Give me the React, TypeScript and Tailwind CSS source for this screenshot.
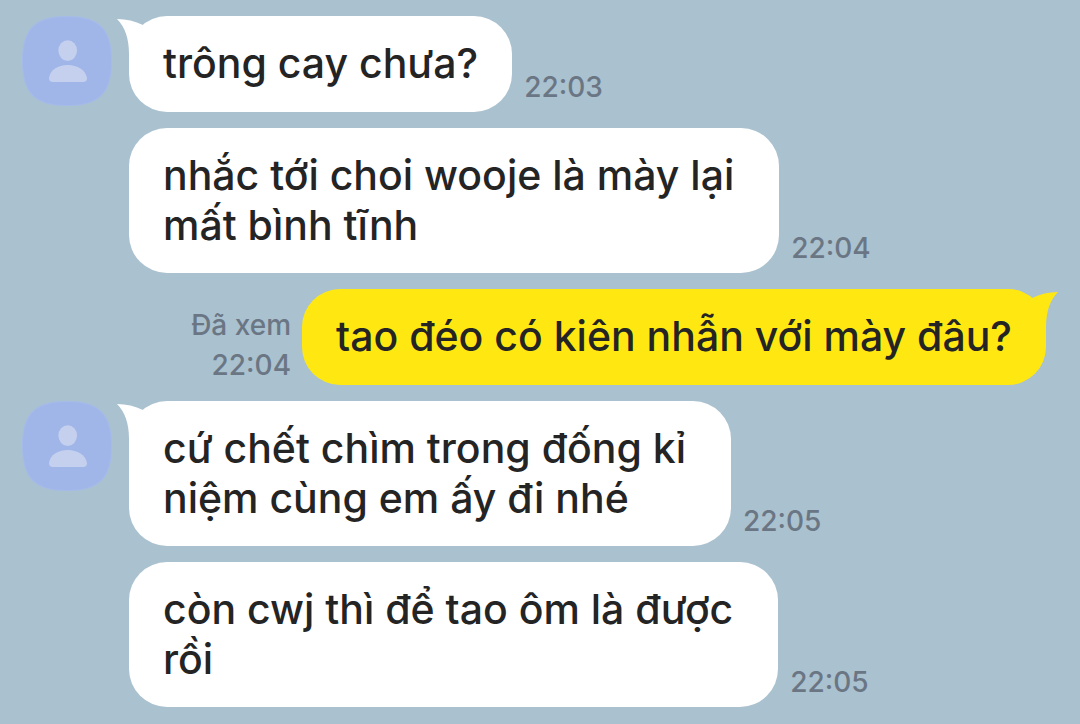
import { clsx } from 'clsx';

type Message = {
  id: number;
  mine?: boolean;
  first?: boolean;
  text: string;
  time: string;
  read?: string;
};

const messages: Message[] = [
  { id: 1, first: true, text: 'trông cay chưa?', time: '22:03' },
  { id: 2, text: 'nhắc tới choi wooje là mày lại \nmất bình tĩnh', time: '22:04' },
  { id: 3, mine: true, first: true, text: 'tao đéo có kiên nhẫn với mày đâu?', time: '22:04', read: 'Đã xem' },
  { id: 4, first: true, text: 'cứ chết chìm trong đống kỉ \nniệm cùng em ấy đi nhé', time: '22:05' },
  { id: 5, text: 'còn cwj thì để tao ôm là được \nrồi', time: '22:05' },
];

export default function App() {
  return (
    <main className="flex min-h-screen flex-col gap-4 bg-[#aac1cf] pt-4 pr-[34px] pb-4 pl-[22px] font-['Inter',sans-serif]">
      {messages.map((message) => (
        <MessageRow key={message.id} message={message} />
      ))}
    </main>
  );
}

function MessageRow({ message }: { message: Message }) {
  const { mine, first, text, time, read } = message;

  return (
    <div className={clsx('flex', mine && 'flex-row-reverse')}>
      {!mine && <div className="mr-[17px] w-[90px] shrink-0">{first && <Avatar />}</div>}
      <div className="relative">
        {first && <Tail mine={mine} />}
        <p
          className={clsx(
            'relative min-h-24 rounded-[38px] px-[34px] pt-[22px] pb-[23px] text-[41px] leading-[50px] font-medium whitespace-pre text-[#242424]',
            mine ? 'bg-[#ffe812]' : 'bg-white',
          )}
        >
          {text}
        </p>
      </div>
      <div
        className={clsx(
          'flex flex-col justify-end text-[28px] leading-10 font-medium text-[#6b7684]',
          mine ? 'mr-[11px] text-right' : 'ml-3 pb-[5px]',
        )}
      >
        {read && <span>{read}</span>}
        <time>{time}</time>
      </div>
    </div>
  );
}

// Default profile picture
function Avatar() {
  return (
    <svg viewBox="0 0 90 90" className="size-[90px]" aria-hidden="true">
      <path d="M45 0C77 0 90 12 90 45S77 90 45 90 0 78 0 45 13 0 45 0Z" fill="#a6bbea" />
      <path d="M45 1C76 1 89 13 89 45S76 89 45 89 1 77 1 45 14 1 45 1Z" fill="#a0b6e8" />
      <ellipse cx="45.700" cy="34.600" rx="9.300" ry="10.400" fill="#c5d0ee" />
      <path d="M27 62C28 54 36 49 45.700 49S63.500 54 65 62Q65 66 61 66H31Q27 66 27 62Z" fill="#c5d0ee" />
    </svg>
  );
}

// Little curl on the top corner of the first bubble
function Tail({ mine }: { mine?: boolean }) {
  return (
    <svg
      viewBox="0 0 40 50"
      className={clsx('absolute top-0 h-[50px] w-10', mine ? '-right-3 -scale-x-100' : '-left-3')}
      aria-hidden="true"
    >
      <path d="M0 3Q14 3 26 9L40 50H12V38Q12 15 0 3Z" fill={mine ? '#ffe812' : '#ffffff'} />
    </svg>
  );
}
